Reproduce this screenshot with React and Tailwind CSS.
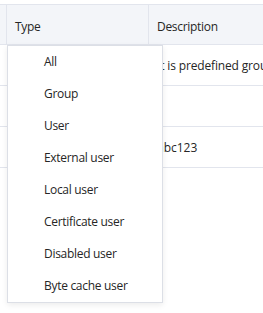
export default function App() {
  const items = ["All", "Group", "User", "External user", "Local user", "Certificate user", "Disabled user", "Byte cache user"];
  const font = { fontFamily: '"Open Sans", "Noto Sans", sans-serif' };
  return (
    <div className="relative w-[263px] h-[313px] bg-white overflow-hidden text-[12px] tracking-[-0.3px] text-[#262626]" style={font}>
      <div className="h-[4px]" />
      <div className="flex h-[41px] bg-[#f3f5f9] border-t border-b border-[#e2e5ed]">
        <div className="w-[7px] shrink-0 border-r border-[#e2e5ed]" />
        <div className="w-[142px] shrink-0 border-r border-[#e2e5ed] flex items-center pl-[8px] pt-[4px]">Type</div>
        <div className="flex-1 flex items-center pl-[8px] pt-[4px]">Description</div>
      </div>
      {[
        { t: "It is predefined group", c: "pl-[8px] tracking-[-0.15px]" },
        { t: "", c: "pl-[8px]" },
        { t: "abc123", c: "pl-[8px] tracking-normal" },
      ].map((r, i) => (
        <div key={i} className="flex h-[41px] border-b border-[#e2e5ed]">
          <div className="w-[149px] shrink-0" />
          <div className={"flex-1 min-w-0 flex items-center pt-[1px] whitespace-nowrap " + r.c}>{r.t}</div>
        </div>
      ))}
      <div className="absolute left-[7px] top-[45px] w-[156px] bg-white border border-[#dcdfe6] shadow-[0_2px_6px_rgba(0,0,0,0.08)]">
        {items.map((it) => (
          <div key={it} className="h-[32px] flex items-center pl-[36px]">{it}</div>
        ))}
      </div>
    </div>
  );
}
